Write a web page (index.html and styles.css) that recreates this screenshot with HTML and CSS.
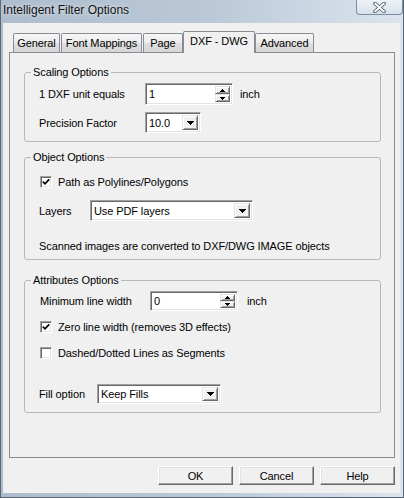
FILE: index.html
```html
<!DOCTYPE html>
<html>
<head>
<meta charset="utf-8">
<title>Intelligent Filter Options</title>
<link rel="stylesheet" href="styles.css">
</head>
<body>
<div class="window">
  <div class="titlebar">
    <span class="title">Intelligent Filter Options</span>
    <div class="close">
      <svg width="13" height="11" viewBox="0 0 13 11">
        <path d="M2 1.5 L11 9.5 M11 1.5 L2 9.5" stroke="#4a5561" stroke-width="3.6" stroke-linecap="round"/>
        <path d="M2 1.5 L11 9.5 M11 1.5 L2 9.5" stroke="#ffffff" stroke-width="1.8" stroke-linecap="round"/>
      </svg>
    </div>
  </div>
  <div class="client">
    <div class="tabs">
      <div class="tab t-general">General</div>
      <div class="tab t-font">Font Mappings</div>
      <div class="tab t-page">Page</div>
      <div class="tab sel t-dxf">DXF - DWG</div>
      <div class="tab t-adv">Advanced</div>
    </div>
    <div class="panel">
      <fieldset class="group g-scaling">
        <legend>Scaling Options</legend>
        <div class="row r-unit">
          <span class="lbl w-unit">1 DXF unit equals</span>
          <div class="edit spin s-unit">
            <span class="val">1</span>
            <div class="spinbtns">
              <div class="sb"><svg width="5" height="3" viewBox="0 0 5 3" shape-rendering="crispEdges"><rect x="2" y="0" width="1" height="1"/><rect x="1" y="1" width="3" height="1"/><rect x="0" y="2" width="5" height="1"/></svg></div>
              <div class="sb"><svg width="5" height="3" viewBox="0 0 5 3" shape-rendering="crispEdges"><rect x="0" y="0" width="5" height="1"/><rect x="1" y="1" width="3" height="1"/><rect x="2" y="2" width="1" height="1"/></svg></div>
            </div>
          </div>
          <span class="unit u1">inch</span>
        </div>
        <div class="row r-prec">
          <span class="lbl w-unit">Precision Factor</span>
          <div class="edit combo c-prec">
            <span class="val">10.0</span>
            <div class="dd"><svg width="7" height="4" viewBox="0 0 7 4" shape-rendering="crispEdges"><rect x="0" y="0" width="7" height="1"/><rect x="1" y="1" width="5" height="1"/><rect x="2" y="2" width="3" height="1"/><rect x="3" y="3" width="1" height="1"/></svg></div>
          </div>
        </div>
      </fieldset>

      <fieldset class="group g-object">
        <legend>Object Options</legend>
        <div class="row r-path">
          <span class="check on"><svg width="8" height="8" viewBox="0 0 8 8"><path d="M0.8 3.6 L3 5.8 L7.2 1.4" fill="none" stroke="#000" stroke-width="1.8"/></svg></span>
          <span class="clabel">Path as Polylines/Polygons</span>
        </div>
        <div class="row r-layers">
          <span class="lbl w-layers">Layers</span>
          <div class="edit combo c-layers">
            <span class="val">Use PDF layers</span>
            <div class="dd"><svg width="7" height="4" viewBox="0 0 7 4" shape-rendering="crispEdges"><rect x="0" y="0" width="7" height="1"/><rect x="1" y="1" width="5" height="1"/><rect x="2" y="2" width="3" height="1"/><rect x="3" y="3" width="1" height="1"/></svg></div>
          </div>
        </div>
        <div class="row r-note">
          <span class="note">Scanned images are converted to DXF/DWG IMAGE objects</span>
        </div>
      </fieldset>

      <fieldset class="group g-attr">
        <legend>Attributes Options</legend>
        <div class="row r-min">
          <span class="lbl w-min">Minimum line width</span>
          <div class="edit spin s-min">
            <span class="val">0</span>
            <div class="spinbtns">
              <div class="sb"><svg width="5" height="3" viewBox="0 0 5 3" shape-rendering="crispEdges"><rect x="2" y="0" width="1" height="1"/><rect x="1" y="1" width="3" height="1"/><rect x="0" y="2" width="5" height="1"/></svg></div>
              <div class="sb"><svg width="5" height="3" viewBox="0 0 5 3" shape-rendering="crispEdges"><rect x="0" y="0" width="5" height="1"/><rect x="1" y="1" width="3" height="1"/><rect x="2" y="2" width="1" height="1"/></svg></div>
            </div>
          </div>
          <span class="unit u2">inch</span>
        </div>
        <div class="row r-zero">
          <span class="check on"><svg width="8" height="8" viewBox="0 0 8 8"><path d="M0.8 3.6 L3 5.8 L7.2 1.4" fill="none" stroke="#000" stroke-width="1.8"/></svg></span>
          <span class="clabel">Zero line width (removes 3D effects)</span>
        </div>
        <div class="row r-dash">
          <span class="check"></span>
          <span class="clabel">Dashed/Dotted Lines as Segments</span>
        </div>
        <div class="row r-fill">
          <span class="lbl w-fill">Fill option</span>
          <div class="edit combo c-fill">
            <span class="val">Keep Fills</span>
            <div class="dd"><svg width="7" height="4" viewBox="0 0 7 4" shape-rendering="crispEdges"><rect x="0" y="0" width="7" height="1"/><rect x="1" y="1" width="5" height="1"/><rect x="2" y="2" width="3" height="1"/><rect x="3" y="3" width="1" height="1"/></svg></div>
          </div>
        </div>
      </fieldset>
    </div>
    <div class="buttons">
      <button class="btn">OK</button>
      <button class="btn">Cancel</button>
      <button class="btn">Help</button>
    </div>
  </div>
</div>
</body>
</html>
```

FILE: styles.css
```css
* { box-sizing: border-box; }
html, body { margin: 0; padding: 0; }
body {
  width: 404px;
  height: 498px;
  overflow: hidden;
  font-family: "Liberation Sans", Arial, sans-serif;
  font-size: 11px;
  color: #000;
  background: #c4d0dc;
}

.window {
  width: 404px;
  height: 498px;
  border: 1px solid #5a6674;
  border-top: none;
  background: linear-gradient(90deg, #aebdcd 0%, #b9c7d6 50%, #cfdae6 82%, #dce5ee 100%);
  display: flex;
  flex-direction: column;
}

.titlebar {
  height: 23px;
  flex: none;
  display: flex;
  justify-content: space-between;
  align-items: flex-start;
  padding-left: 2px;
  padding-right: 0;
}
.title {
  margin-top: 3px;
  font-size: 12px;
  line-height: 14px;
  color: #141414;
  text-shadow: 0 0 5px rgba(255, 255, 255, 0.85);
}
.close {
  width: 47px;
  height: 15px;
  border: 1px solid #7e8d9e;
  border-top: none;
  border-radius: 0 0 4px 4px;
  background: linear-gradient(#eef3f8, #d7e0ea);
  display: flex;
  align-items: center;
  justify-content: center;
}

.client {
  margin: 0 3px 4px 2px;
  height: 470px;
  flex: none;
  background: #f0f0f0;
  padding: 8px 0 0 6px;
  display: flex;
  flex-direction: column;
  letter-spacing: -0.1px;
}

.tabs {
  display: flex;
  align-items: flex-end;
  height: 21px;
  padding-left: 4px;
  position: relative;
  z-index: 1;
}
.tab {
  height: 19px;
  border: 1px solid #898c95;
  border-bottom: none;
  border-radius: 2px 2px 0 0;
  background: linear-gradient(#f6f6f6, #ececec 50%, #e0e0e0 51%, #d6d6d6);
  text-align: center;
  line-height: 18px;
  white-space: nowrap;
}
.tab.sel {
  height: 22px;
  margin-bottom: -1px;
  background: #f0f0f0;
  line-height: 19px;
}
.t-general { width: 47px; margin-right: 1px; }
.t-font { width: 81px; margin-right: 1px; }
.t-page { width: 40px; }
.t-dxf { width: 72px; }
.t-adv { width: 59px; }

.panel {
  width: 386px;
  height: 406px;
  flex: none;
  border: 1px solid #898c95;
  background: #f0f0f0;
  padding: 12px 0 0 14px;
}

.group {
  width: 357px;
  margin: 0;
  padding: 0;
  min-width: 0;
  border: 1px solid #b8b8b8;
  border-radius: 3px;
}
.group legend {
  margin-left: 6px;
  padding: 0 2px;
  line-height: 14px;
}
.g-scaling { padding-bottom: 8px; }
.g-object { margin-top: 8px; padding-bottom: 6px; }
.g-attr { margin-top: 13px; padding-bottom: 8px; }

.row {
  display: flex;
  align-items: center;
  padding-left: 14px;
}
.r-unit { margin-top: 4px; height: 22px; }
.r-prec { margin-top: 7px; height: 21px; }
.r-path { margin-top: 10px; height: 16px; padding-left: 15px; }
.r-layers { margin-top: 10px; height: 21px; }
.r-note { margin-top: 18px; height: 14px; line-height: 14px; }
.r-min { margin-top: 4px; height: 20px; padding-left: 15px; }
.r-zero { margin-top: 8px; height: 16px; padding-left: 15px; }
.r-dash { margin-top: 10px; height: 16px; padding-left: 15px; }
.r-fill { margin-top: 23px; height: 20px; }

.lbl { flex: none; white-space: nowrap; }
.w-unit { width: 106px; }
.w-layers { width: 51px; }
.w-min { width: 110px; }
.w-fill { width: 58px; }

.edit {
  height: 100%;
  background: #fff;
  border: 1px solid;
  border-color: #a0a0a0 #ffffff #ffffff #a0a0a0;
  box-shadow: inset 1px 1px #696969, inset -1px -1px #e3e3e3;
  display: flex;
  align-items: stretch;
  padding: 2px;
}
.val {
  flex: 1;
  display: flex;
  align-items: center;
  padding-left: 1px;
  white-space: nowrap;
}
.s-unit { width: 88px; }
.s-min { width: 88px; }
.c-prec { width: 56px; }
.c-layers { width: 163px; }
.c-fill { width: 124px; }

.spinbtns {
  width: 15px;
  display: flex;
  flex-direction: column;
}
.sb, .dd {
  background: #f0f0f0;
  border: 1px solid;
  border-color: #e3e3e3 #696969 #696969 #e3e3e3;
  box-shadow: inset 1px 1px #ffffff, inset -1px -1px #a0a0a0;
  display: flex;
  align-items: center;
  justify-content: center;
}
.sb { flex: 1; }
.sb svg, .dd svg { display: block; }
.dd { width: 16px; }

.unit { white-space: nowrap; }
.u1 { margin-left: 7px; }
.u2 { margin-left: 9px; }

.check {
  width: 12px;
  height: 12px;
  flex: none;
  background: #fff;
  border: 1px solid;
  border-color: #a0a0a0 #ffffff #ffffff #a0a0a0;
  box-shadow: inset 1px 1px #696969, inset -1px -1px #e3e3e3;
  display: flex;
  align-items: center;
  justify-content: center;
}
.check svg { display: block; }
.clabel { margin-left: 6px; white-space: nowrap; }
.note { white-space: nowrap; }

.buttons {
  width: 386px;
  margin-top: 8px;
  display: flex;
  justify-content: flex-end;
  gap: 6px;
}
.btn {
  width: 75px;
  height: 19px;
  padding: 0;
  font-family: "Liberation Sans", Arial, sans-serif;
  font-size: 11px;
  letter-spacing: -0.1px;
  color: #000;
  background: #f0f0f0;
  border: 1px solid;
  border-color: #ffffff #696969 #696969 #ffffff;
  box-shadow: inset -1px -1px #a0a0a0, inset 1px 1px #e3e3e3;
}
```
